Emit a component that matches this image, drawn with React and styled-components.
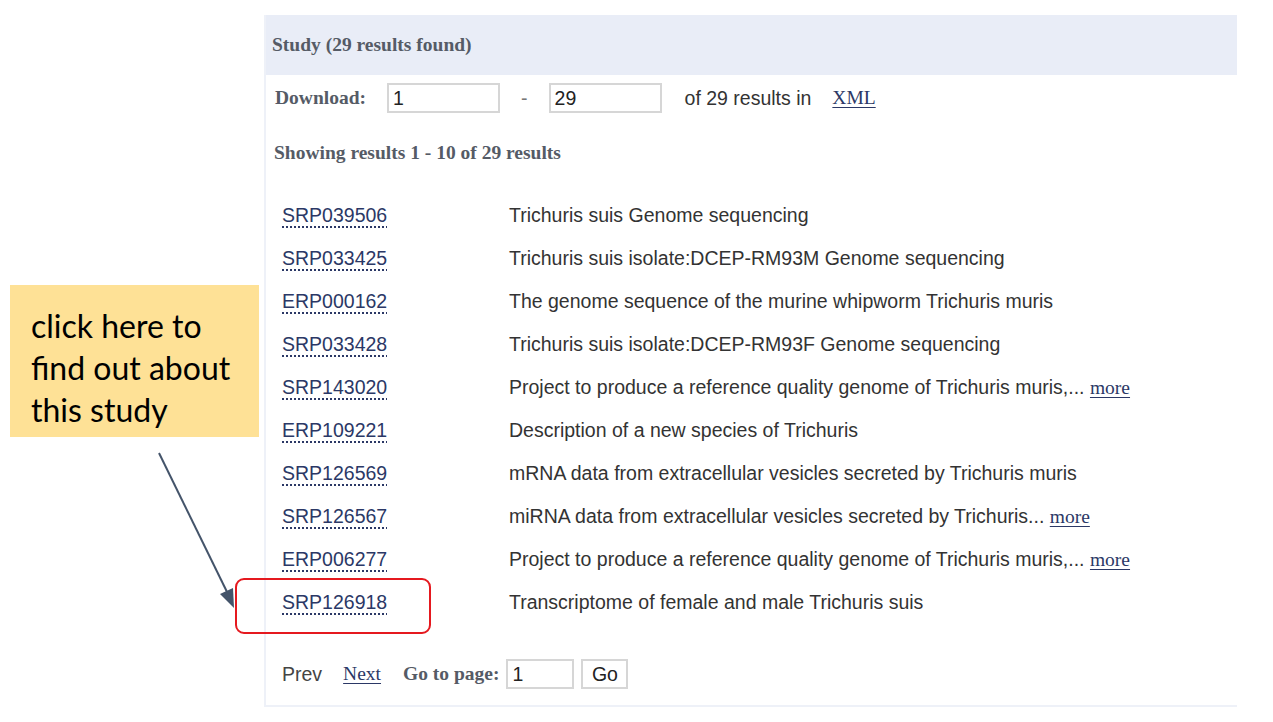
import styled, { createGlobalStyle } from 'styled-components';

const GlobalStyle = createGlobalStyle`
  html, body {
    margin: 0;
    padding: 0;
    background: #ffffff;
  }
`;

const serif = `"Liberation Serif", "Times New Roman", serif`;
const sans = `"Liberation Sans", Arial, sans-serif`;
const fs = '19.5px';

const Page = styled.div`
  position: relative;
  width: 1273px;
  height: 722px;
  overflow: hidden;
  padding-top: 15px;
  box-sizing: border-box;
`;

const Panel = styled.div`
  margin-left: 264px;
  width: 973px;
  box-sizing: border-box;
  border-left: 2px solid #eef1f8;
  border-bottom: 2px solid #eef1f8;
  padding-bottom: 16px;
`;

const Header = styled.div`
  height: 60px;
  background: #e9edf7;
  display: flex;
  align-items: center;
  padding-left: 6px;
  font-family: ${serif};
  font-weight: bold;
  font-size: ${fs};
  color: #555b66;
`;

const DownloadRow = styled.div`
  display: flex;
  align-items: center;
  padding: 8px 0 0 9px;
  font-size: ${fs};
`;

const Label = styled.span`
  font-family: ${serif};
  font-weight: bold;
  color: #555b66;
  margin-right: ${({ $gap }) => $gap || 0}px;
`;

const Field = styled.input`
  box-sizing: border-box;
  width: ${({ $w }) => $w}px;
  height: 30px;
  border: 2px solid #d6d6d6;
  padding: 0 4px;
  font-family: ${sans};
  font-size: ${fs};
  color: #222;
  outline: none;
`;

const Dash = styled.span`
  font-family: ${sans};
  color: #777;
  margin: 0 21px 0 21px;
`;

const Plain = styled.span`
  font-family: ${sans};
  color: #333;
  margin: 0 21px 0 23px;
`;

const SerifLink = styled.a`
  font-family: ${serif};
  font-size: ${fs};
  color: #2b3866;
  text-decoration: underline;
  text-underline-offset: 3px;
`;

const Showing = styled.div`
  margin-top: 29px;
  padding-left: 8px;
  line-height: 22px;
  font-family: ${serif};
  font-weight: bold;
  font-size: ${fs};
  color: #555b66;
`;

const List = styled.div`
  margin-top: 30px;
  display: flex;
  flex-direction: column;
`;

const Row = styled.div`
  display: grid;
  grid-template-columns: 227px 1fr;
  align-items: center;
  height: 43px;
  padding-left: 16px;
  font-family: ${sans};
  font-size: ${fs};
`;

const Accession = styled.a`
  color: #2b3866;
  text-decoration: underline dotted;
  text-decoration-thickness: 2px;
  text-underline-offset: 4px;
  justify-self: start;
`;

const Desc = styled.span`
  color: #333;
`;

const Pager = styled.div`
  margin-top: 35px;
  padding-left: 16px;
  display: flex;
  align-items: center;
  font-size: ${fs};
`;

const Prev = styled.span`
  font-family: ${sans};
  color: #444;
  margin-right: 21px;
`;

const NextLink = styled(SerifLink)`
  margin-right: 22px;
`;

const GoButton = styled.button`
  box-sizing: border-box;
  margin-left: 7px;
  width: 47px;
  height: 30px;
  border: 2px solid #d6d6d6;
  background: #fff;
  font-family: ${sans};
  font-size: ${fs};
  color: #222;
  padding: 0;
`;

const Callout = styled.div`
  position: absolute;
  left: 10px;
  top: 285px;
  width: 249px;
  height: 152px;
  box-sizing: border-box;
  background: #fee196;
  padding: 20px 0 0 21px;
  font-family: Lato, "Open Sans", sans-serif;
  font-size: 32px;
  line-height: 42px;
  color: #000;
`;

const Highlight = styled.div`
  position: absolute;
  left: 235px;
  top: 578px;
  width: 196px;
  height: 56px;
  box-sizing: border-box;
  border: 2px solid #e5191f;
  border-radius: 9px;
`;

const ArrowSvg = styled.svg`
  position: absolute;
  left: 0;
  top: 0;
  pointer-events: none;
`;

const rows = [
  ['SRP039506', 'Trichuris suis Genome sequencing'],
  ['SRP033425', 'Trichuris suis isolate:DCEP-RM93M Genome sequencing'],
  ['ERP000162', 'The genome sequence of the murine whipworm Trichuris muris'],
  ['SRP033428', 'Trichuris suis isolate:DCEP-RM93F Genome sequencing'],
  ['SRP143020', 'Project to produce a reference quality genome of Trichuris muris,...', true],
  ['ERP109221', 'Description of a new species of Trichuris'],
  ['SRP126569', 'mRNA data from extracellular vesicles secreted by Trichuris muris'],
  ['SRP126567', 'miRNA data from extracellular vesicles secreted by Trichuris...', true],
  ['ERP006277', 'Project to produce a reference quality genome of Trichuris muris,...', true],
  ['SRP126918', 'Transcriptome of female and male Trichuris suis'],
];

export default function App() {
  return (
    <Page>
      <GlobalStyle />
      <Panel>
        <Header>Study (29 results found)</Header>
        <DownloadRow>
          <Label $gap={21}>Download:</Label>
          <Field $w={113} defaultValue="1" />
          <Dash>-</Dash>
          <Field $w={113} defaultValue="29" />
          <Plain>of 29 results in</Plain>
          <SerifLink href="#">XML</SerifLink>
        </DownloadRow>
        <Showing>Showing results 1 - 10 of 29 results</Showing>
        <List>
          {rows.map(([id, text, more]) => (
            <Row key={id}>
              <Accession href="#">{id}</Accession>
              <Desc>
                {text}
                {more && (
                  <>
                    {' '}
                    <SerifLink href="#">more</SerifLink>
                  </>
                )}
              </Desc>
            </Row>
          ))}
        </List>
        <Pager>
          <Prev>Prev</Prev>
          <NextLink href="#">Next</NextLink>
          <Label $gap={7}>Go to page:</Label>
          <Field $w={68} defaultValue="1" />
          <GoButton>Go</GoButton>
        </Pager>
      </Panel>

      <Callout>
        click here to
        <br />
        find out about
        <br />
        this study
      </Callout>

      <Highlight />

      <ArrowSvg width="1273" height="722">
        <line x1="159" y1="453" x2="229" y2="596" stroke="#44546a" strokeWidth="2" />
        <polygon points="234,608 220,594 233,588" fill="#44546a" />
      </ArrowSvg>
    </Page>
  );
}
